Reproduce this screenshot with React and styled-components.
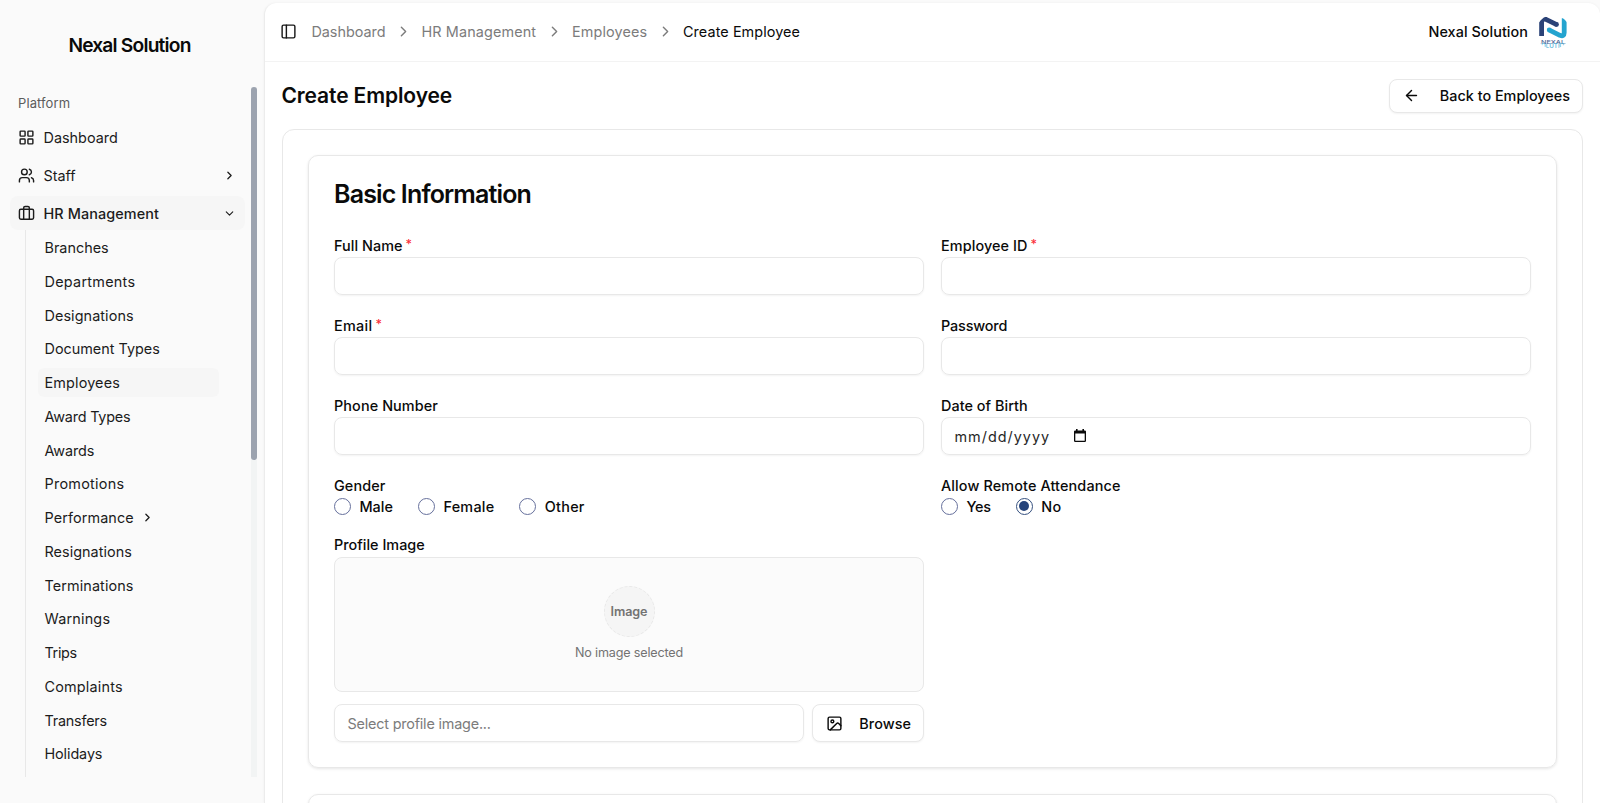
/*
 *
 * CreateEmployee
 *
 */

import React from 'react';
import styled, { createGlobalStyle } from 'styled-components';
import { ArrowLeft, Briefcase, ChevronDown, ChevronRight, Image, LayoutGrid, PanelLeft, Users } from 'lucide-react';

const GlobalStyle = createGlobalStyle`
	* {
		box-sizing: border-box;
	}
	body {
		margin: 0;
		background: #fafafa;
		color: #0a0a0a;
		font-family: Inter, 'Liberation Sans', sans-serif;
		font-size: 14.4px;
		overflow: hidden;
	}
`;

const Page = styled.div`
	display: flex;
	height: 803px;
	overflow: hidden;
`;

// spacing between letters varies from text to text
const Text = styled.span`
	letter-spacing: ${(props) => props.$track || 0}px;
	white-space: nowrap;
`;

/* Sidebar */
const Sidebar = styled.aside`
	width: 264px;
	flex: none;
	display: flex;
	flex-direction: column;
`;

const Brand = styled.div`
	height: 87px;
	padding: 2px 5px 0 0;
	display: flex;
	align-items: center;
	justify-content: center;
	font-size: 19.2px;
	font-weight: 600;
`;

const ScrollArea = styled.div`
	height: 690px;
	display: flex;
	justify-content: space-between;
	padding: 0 7.5px 0 10px;
	overflow: hidden;
`;

const Nav = styled.nav`
	width: 234.5px;
`;

const ScrollTrack = styled.div`
	width: 6px;
	background: #f2f4f4;
`;

const ScrollThumb = styled.div`
	height: 373px;
	border-radius: 3px;
	background: #9ca3af;
`;

const GroupLabel = styled.div`
	height: 33.4px;
	padding: 0 0 1px 8px;
	display: flex;
	align-items: center;
	font-size: 13px;
	color: #5c5c5c;
`;

const NavItem = styled.div`
	height: 34px;
	margin-bottom: 4px;
	padding: 0 9px 0 8px;
	display: flex;
	align-items: center;
	gap: 8.5px;
	border-radius: 8px;
	color: #1c1c1c;
	font-weight: ${(props) => (props.$active ? 500 : 400)};
	background: ${(props) => (props.$active ? '#f6f6f6' : 'transparent')};

	& > span {
		flex: 1;
	}
`;

const SubNav = styled.div`
	margin: -4px 0 0 15px;
	padding: 2.5px 0 0 12px;
	height: 560px;
	border-left: 1px solid #e8e8e8;
`;

const SubItem = styled.div`
	width: 181px;
	height: 29.5px;
	margin-bottom: 4.25px;
	padding-left: 6.5px;
	display: flex;
	align-items: center;
	gap: 7.5px;
	border-radius: 6px;
	color: #1c1c1c;
	background: ${(props) => (props.$active ? '#f6f6f6' : 'transparent')};
`;

/* Content */
const Main = styled.main`
	flex: 1;
	margin-top: 3px;
	background: #fff;
	border-left: 1px solid #ececec;
	border-radius: 12px 12px 0 0;
	box-shadow: 0 0 3px rgba(0, 0, 0, 0.05);
`;

const TopBar = styled.header`
	height: 59px;
	padding: 0 30px 1px 15px;
	display: flex;
	align-items: center;
	justify-content: space-between;
	border-bottom: 1px solid #f3f3f3;
`;

const Crumbs = styled.div`
	display: flex;
	align-items: center;
	gap: 9.4px;
	color: #7c7c7c;

	& > svg:first-child {
		margin-right: 5px;
		color: #171717;
	}
`;

const Current = styled(Text)`
	color: #0a0a0a;
`;

const Account = styled.div`
	display: flex;
	align-items: center;
	gap: 8px;
	font-weight: 500;
`;

const Content = styled.div`
	padding: 16.5px 17px 0 16.5px;
`;

const TitleRow = styled.div`
	height: 34px;
	margin-bottom: 16.5px;
	display: flex;
	align-items: center;
	justify-content: space-between;
`;

const Title = styled.h1`
	margin: 0;
	font-size: 21px;
	font-weight: 600;
`;

const Button = styled.button`
	height: ${(props) => props.$height}px;
	width: ${(props) => props.$width}px;
	padding: 0 12px 0 12.5px;
	display: flex;
	align-items: center;
	justify-content: space-between;
	border: 1px solid #e8e8e8;
	border-radius: 8px;
	background: #fff;
	box-shadow: 0 1px 2px rgba(0, 0, 0, 0.05);
	color: #0a0a0a;
	font: 500 14.4px Inter, 'Liberation Sans', sans-serif;
`;

const Panel = styled.section`
	height: 900px;
	padding: 25px;
	border: 1px solid #e8e8e8;
	border-radius: 12px;
`;

const Card = styled.div`
	height: ${(props) => props.$height}px;
	margin-bottom: 26px;
	padding: 25px 25px 25px 25.5px;
	border: 1px solid #e8e8e8;
	border-radius: 10px;
	box-shadow: 0 1px 3px rgba(0, 0, 0, 0.1);
`;

const CardTitle = styled.h2`
	height: 26px;
	margin: 0 0 28px;
	font-size: 25px;
	line-height: 26px;
	font-weight: 600;
`;

const Fields = styled.div`
	display: grid;
	grid-template-columns: 1fr 1fr;
	gap: 20.2px 17px;
`;

const Label = styled.div`
	height: 20px;
	margin-bottom: 2px;
	display: flex;
	align-items: center;
	font-weight: 500;
`;

const Star = styled.span`
	margin: -2px 0 0 3px;
	font-size: 12.5px;
	color: #fb2c36;
`;

const Input = styled.div`
	height: 38px;
	flex: 1;
	padding: 0 12.5px;
	display: flex;
	align-items: center;
	border: 1px solid #e8e8e8;
	border-radius: 8px;
	box-shadow: 0 1px 2px rgba(0, 0, 0, 0.05);
	color: ${(props) => (props.$muted ? '#7c7c7c' : '#262626')};

	& > svg {
		margin-left: 23.5px;
	}
`;

const RadioGroup = styled.div`
	height: 17px;
	display: flex;
	align-items: center;
	gap: 25px;
`;

const Option = styled.div`
	display: flex;
	align-items: center;
	gap: 8.4px;
	font-weight: 500;
`;

const Dot = styled.span`
	width: 17px;
	height: 17px;
	display: flex;
	align-items: center;
	justify-content: center;
	border: 1px solid ${(props) => (props.$checked ? '#35507f' : '#66709c')};
	border-radius: 50%;

	&::after {
		content: '';
		width: 10px;
		height: 10px;
		border-radius: 50%;
		background: ${(props) => (props.$checked ? '#25437a' : 'transparent')};
	}
`;

const Preview = styled.div`
	height: 135px;
	margin-bottom: 12.4px;
	padding-top: 28px;
	display: flex;
	flex-direction: column;
	align-items: center;
	border: 1px solid #e8e8e8;
	border-radius: 8px;
	background: #fbfbfb;
	font-size: 12.6px;
	color: #737373;
`;

const Round = styled.div`
	width: 51px;
	height: 51px;
	margin-bottom: 8.5px;
	display: flex;
	align-items: center;
	justify-content: center;
	border: 1px dashed #e8e8e8;
	border-radius: 50%;
	background: #f5f5f5;
	font-weight: 600;
`;

const FileRow = styled.div`
	display: flex;
	gap: 8.5px;
`;

const Logo = () => (
	<svg width="34" height="34" viewBox="0 0 34 34">
		<clipPath id="avatar">
			<circle cx="17" cy="17" r="17" />
		</clipPath>
		<g clipPath="url(#avatar)">
			<path d="M5.6 21V7.4Q5.6 3 10 4.4L20.7 9.6" fill="none" stroke="#2b4377" strokeWidth="4.8" strokeLinecap="butt" strokeLinejoin="round" />
			<path d="M28.2 3.2v14.6q0 4.2-4.3 2.5L13 14.8" fill="none" stroke="#24a4cf" strokeWidth="4.8" strokeLinecap="butt" strokeLinejoin="round" />
			<circle cx="20.5" cy="9.5" r="2.4" fill="#2b4377" />
			<circle cx="13.2" cy="14.9" r="2.4" fill="#24a4cf" />
			<text x="5" y="29.2" fontSize="5" fontWeight="500" textLength="24" lengthAdjust="spacingAndGlyphs" fill="#4d6595">NEXAL</text>
			<text x="1" y="33.4" fontSize="5.6" fontWeight="500" textLength="32" lengthAdjust="spacingAndGlyphs" fill="#4fb3d8">SOLUTION</text>
		</g>
	</svg>
);

const CalendarIcon = () => (
	<svg width="12" height="14" viewBox="0 0 12 14">
		<path d="M2 0h1.6v1.4h4.8V0H10v1.4h.8q1.2 0 1.2 1.2v9.2q0 1.2-1.2 1.2H1.2Q0 13 0 11.8V2.6q0-1.2 1.2-1.2H2zM1.3 4.6v7.1h9.4V4.6z" fill="#0a0a0a" fillRule="evenodd" />
	</svg>
);

const subItems = [
	{ name: 'Branches', track: 0 },
	{ name: 'Departments', track: 0.27 },
	{ name: 'Designations', track: 0.08 },
	{ name: 'Document Types', track: 0 },
	{ name: 'Employees', track: 0.15, active: true },
	{ name: 'Award Types', track: -0.2 },
	{ name: 'Awards', track: -0.1 },
	{ name: 'Promotions', track: 0.27 },
	{ name: 'Performance', track: 0.1, more: true },
	{ name: 'Resignations', track: 0.04 },
	{ name: 'Terminations', track: 0.1 },
	{ name: 'Warnings', track: 0.2 },
	{ name: 'Trips', track: -0.35 },
	{ name: 'Complaints', track: 0.2 },
	{ name: 'Transfers', track: -0.22 },
	{ name: 'Holidays', track: -0.1 }
];

const Field = ({ label, track, required, children }) => (
	<div>
		<Label>
			<Text $track={track}>{label}</Text>
			{required && <Star>*</Star>}
		</Label>
		{children || <Input />}
	</div>
);

const Radio = ({ label, track, checked }) => (
	<Option>
		<Dot $checked={checked} />
		<Text $track={track}>{label}</Text>
	</Option>
);

const App = () => {
	return (
		<Page>
			<GlobalStyle />
			<Sidebar>
				<Brand>
					<Text $track={-0.8}>Nexal Solution</Text>
				</Brand>
				<ScrollArea>
					<Nav>
						<GroupLabel>
							<Text $track={0.1}>Platform</Text>
						</GroupLabel>
						<NavItem>
							<LayoutGrid size={17} />
							<Text>Dashboard</Text>
						</NavItem>
						<NavItem>
							<Users size={17} />
							<Text $track={0}>Staff</Text>
							<ChevronRight size={13} strokeWidth={2.4} />
						</NavItem>
						<NavItem $active>
							<Briefcase size={17} />
							<Text $track={0.1}>HR Management</Text>
							<ChevronDown size={13} />
						</NavItem>
						<SubNav>
							{subItems.map((item) => (
								<SubItem key={item.name} $active={item.active}>
									<Text $track={item.track}>{item.name}</Text>
									{item.more && <ChevronRight size={13} strokeWidth={2.4} />}
								</SubItem>
							))}
						</SubNav>
					</Nav>
					<ScrollTrack>
						<ScrollThumb />
					</ScrollTrack>
				</ScrollArea>
			</Sidebar>
			<Main>
				<TopBar>
					<Crumbs>
						<PanelLeft size={17} />
						<Text>Dashboard</Text>
						<ChevronRight size={17} />
						<Text $track={0.13}>HR Management</Text>
						<ChevronRight size={17} />
						<Text $track={0.13}>Employees</Text>
						<ChevronRight size={17} />
						<Current $track={0.08}>Create Employee</Current>
					</Crumbs>
					<Account>
						<Text $track={0.05}>Nexal Solution</Text>
						<Logo />
					</Account>
				</TopBar>
				<Content>
					<TitleRow>
						<Title>
							<Text $track={-0.12}>Create Employee</Text>
						</Title>
						<Button $height={34} $width={194}>
							<ArrowLeft size={17} />
							<Text>Back to Employees</Text>
						</Button>
					</TitleRow>
					<Panel>
						<Card $height={613}>
							<CardTitle>
								<Text $track={-0.85}>Basic Information</Text>
							</CardTitle>
							<Fields>
								<Field label="Full Name" track={0.05} required />
								<Field label="Employee ID" track={0.1} required />
								<Field label="Email" track={0.3} required />
								<Field label="Password" track={-0.15} />
								<Field label="Phone Number" track={0.1} />
								<Field label="Date of Birth" track={0.05}>
									<Input>
										<Text $track={1}>mm/dd/yyyy</Text>
										<CalendarIcon />
									</Input>
								</Field>
								<Field label="Gender" track={0.1}>
									<RadioGroup>
										<Radio label="Male" track={0.07} />
										<Radio label="Female" track={0.25} />
										<Radio label="Other" track={0.25} />
									</RadioGroup>
								</Field>
								<Field label="Allow Remote Attendance" track={0.13}>
									<RadioGroup>
										<Radio label="Yes" track={-0.2} />
										<Radio label="No" track={0.4} checked />
									</RadioGroup>
								</Field>
								<Field label="Profile Image" track={0.02}>
									<Preview>
										<Round>
											<Text $track={-0.1}>Image</Text>
										</Round>
										<Text $track={-0.18}>No image selected</Text>
									</Preview>
									<FileRow>
										<Input $muted>
											<Text $track={-0.19}>Select profile image...</Text>
										</Input>
										<Button $height={38} $width={112}>
											<Image size={17} />
											<Text $track={0.05}>Browse</Text>
										</Button>
									</FileRow>
								</Field>
							</Fields>
						</Card>
						<Card $height={200} />
					</Panel>
				</Content>
			</Main>
		</Page>
	);
};

export default App;
